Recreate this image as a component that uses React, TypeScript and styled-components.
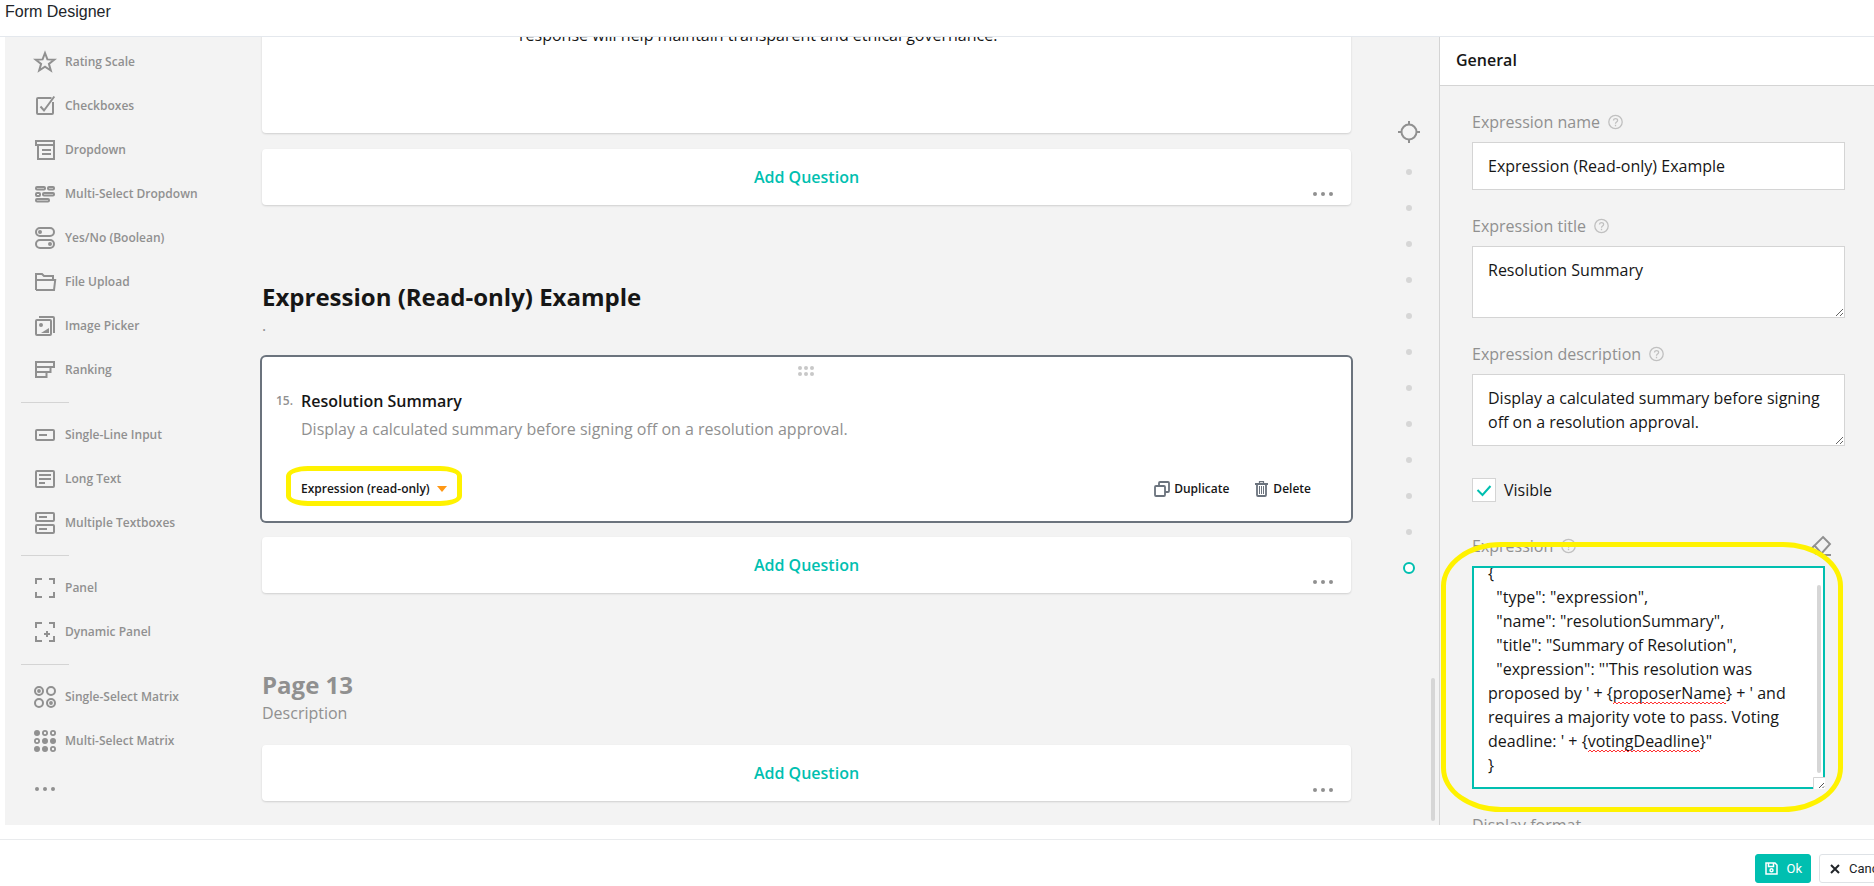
import React, { useEffect, useRef } from "react";
import styled, { createGlobalStyle, css } from "styled-components";

const teal = "#00bfb0";
const muted = "#909090";
const ink = "#161616";
const line = "#d4d4d4";
const slate = "#6b737d";

const GlobalStyle = createGlobalStyle`
  *, *::before, *::after { box-sizing: border-box; }
  html, body { margin: 0; height: 100%; overflow: hidden; }
  body { background: #fff; color: ${ink}; font: 400 16px/24px "Open Sans", sans-serif; }
  #root { height: 100%; }
  button, input, textarea { font: inherit; color: inherit; margin: 0; }
  button { border: 0; background: none; padding: 0; cursor: pointer; }
  h1, h2, h3, p { margin: 0; }
  ul { list-style: none; margin: 0; padding: 0; }
`;

const Dialog = styled.div`
  display: flex;
  flex-direction: column;
  height: 100%;
  min-height: 0;
`;

const TitleBar = styled.header`
  flex: none;
  height: 37px;
  padding: 3px 5px;
  border-bottom: 1px solid #e4e8ed;
  h1 {
    font: 400 16px/18px "Liberation Sans", Arial, sans-serif;
    color: #212529;
  }
`;

const Workspace = styled.main`
  flex: 1;
  min-height: 0;
  display: flex;
  margin: 0 0 14px 5px;
  background: #f3f3f3;
  overflow: hidden;
`;

const Toolbox = styled.nav`
  flex: none;
  width: 257px;
  padding: 3px 16px 0;
`;

const ToolButton = styled.button`
  display: flex;
  align-items: center;
  gap: 8px;
  height: 44px;
  padding: 0 12px;
  color: ${muted};
  font-size: 12px;
  font-weight: 600;
  line-height: 16px;
  white-space: nowrap;
`;

const ToolRule = styled.hr`
  width: 48px;
  margin: 10px 0;
  border: 0;
  border-top: 1px solid ${line};
`;

const MoreTools = styled(ToolButton)`
  margin-top: 4px;
`;

const Surface = styled.section`
  flex: 1;
  min-width: 0;
  display: flex;
  flex-direction: column;
  justify-content: flex-end;
  padding-bottom: 24px;
  > * { flex: none; }
`;

const Card = styled.div`
  background: #fff;
  border-radius: 4px;
  box-shadow: 0 1px 2px rgba(0, 0, 0, 0.15);
`;

const HtmlCard = styled(Card)`
  padding: 24px 257px 86px;
`;

const AddCard = styled(Card)`
  display: grid;
  grid-template-columns: 40px 1fr 40px;
  height: 56px;
  margin-top: 16px;
`;

const AddButton = styled.button`
  grid-column: 2;
  color: ${teal};
  font-weight: 600;
`;

const MoreButton = styled.button`
  align-self: end;
  justify-self: start;
  width: 24px;
  height: 22px;
  display: flex;
  color: ${muted};
`;

const PageHead = styled.div<{ $muted?: boolean }>`
  padding: 76px 0 20px;
  h2 {
    font-size: 24px;
    font-weight: 700;
    line-height: 32px;
    color: ${(p) => (p.$muted ? muted : ink)};
  }
  p { color: ${muted}; }
  & + ${AddCard} { margin-top: 0; }
`;

const QuestionCard = styled(Card)`
  height: 164px;
  box-shadow: 0 0 0 2px ${slate};
  padding: 8px 40px 20px 14px;
  display: flex;
  flex-direction: column;
`;

const DragHandle = styled.button`
  align-self: center;
  margin-left: 25px;
  height: 12px;
  width: 24px;
  display: flex;
  align-items: center;
  justify-content: center;
  color: #c8c8c8;
`;

const QuestionText = styled.div`
  display: grid;
  grid-template-columns: 25px 1fr;
  row-gap: 4px;
  margin-top: 12px;
  span { font-size: 12px; font-weight: 600; color: ${muted}; }
  h3 { font-size: 16px; font-weight: 600; line-height: 24px; }
  p { grid-column: 2; color: ${muted}; }
`;

const QuestionActions = styled.div`
  display: flex;
  align-items: center;
  gap: 26px;
  height: 24px;
  margin-top: auto;
  padding-left: 25px;
`;

const ActionButton = styled.button`
  position: relative;
  display: flex;
  align-items: center;
  gap: 4px;
  height: 24px;
  font-size: 12px;
  font-weight: 600;
  line-height: 16px;
  svg { color: ${slate}; }
`;

const TypeButton = styled(ActionButton)`
  gap: 7px;
  margin-right: auto;
`;

const marker = css`
  position: absolute;
  border: 5px solid #fff200;
  pointer-events: none;
`;

const TypeMarker = styled.i`
  ${marker}
  inset: -11px -15px -5px;
  border-radius: 22px / 10px;
`;

const Navigator = styled.nav`
  flex: none;
  width: 88px;
  padding: 83px 0 0 46px;
  position: relative;
  ul { margin-top: 10px; }
`;

const NavTarget = styled.button`
  display: flex;
  width: 24px;
  height: 24px;
  color: ${muted};
`;

const NavDot = styled.button<{ $active?: boolean }>`
  display: grid;
  place-items: center;
  width: 24px;
  height: 36px;
  &::before {
    content: "";
    width: ${(p) => (p.$active ? 12 : 6)}px;
    height: ${(p) => (p.$active ? 12 : 6)}px;
    border-radius: 50%;
    ${(p) => (p.$active ? `border: 2px solid ${teal}; background: #fff;` : "background: #d6d6d6;")}
  }
`;

const ScrollThumb = styled.i`
  position: absolute;
  right: 4px;
  bottom: 4px;
  width: 4px;
  height: 143px;
  border-radius: 2px;
  background: #d6d6d6;
`;

const Properties = styled.aside`
  flex: none;
  width: 435px;
  border-left: 1px solid ${line};
`;

const PanelHead = styled.h2`
  height: 49px;
  padding: 11px 16px;
  border-bottom: 1px solid ${line};
  background: #fff;
  font-size: 16px;
  font-weight: 600;
  line-height: 24px;
`;

const Fields = styled.form`
  display: flex;
  flex-direction: column;
  gap: 24px;
  padding: 24px 29px 0 32px;
`;

const Field = styled.div`
  display: flex;
  flex-direction: column;
  gap: 8px;
`;

const FieldHead = styled.div`
  display: flex;
  align-items: center;
  gap: 8px;
  height: 24px;
  color: ${muted};
  svg { color: #c0c0c0; }
`;

const EraseButton = styled.button`
  margin: 0 12px 0 auto;
  display: flex;
  svg { color: ${muted}; }
`;

const box = css`
  display: block;
  width: 100%;
  border: 1px solid ${line};
  border-radius: 0;
  background: #fff;
  outline: none;
`;

const TextInput = styled.input`
  ${box}
  height: 48px;
  padding: 0 15px;
`;

const TextBox = styled.textarea`
  ${box}
  height: 72px;
  padding: 11px 15px;
  resize: vertical;
`;

const CheckLabel = styled.label`
  display: flex;
  align-items: center;
  gap: 8px;
  height: 24px;
  margin: 8px 0;
`;

const CheckBox = styled.span`
  position: relative;
  display: flex;
  width: 24px;
  height: 24px;
  color: ${teal};
  input {
    appearance: none;
    width: 24px;
    height: 24px;
    border: 1px solid ${line};
    background: #fff;
  }
  svg { position: absolute; inset: 0; pointer-events: none; }
`;

const CodeWrap = styled.div`
  position: relative;
  margin-right: 20px;
`;

const CodeBox = styled.textarea`
  ${box}
  height: 223px;
  padding: 11px 22px 10px 14px;
  border: 2px solid ${teal};
  resize: none;
  scrollbar-width: none;
`;

const CodeThumb = styled.i`
  position: absolute;
  right: 4px;
  top: 19px;
  width: 4px;
  height: 188px;
  border-radius: 2px;
  background: #d6d6d6;
`;

const Grip = styled.svg`
  position: absolute;
  right: 0;
  bottom: 0;
`;

const Squiggle = styled.svg<{ $x: number; $y: number }>`
  position: absolute;
  left: ${(p) => p.$x}px;
  top: ${(p) => p.$y}px;
  pointer-events: none;
`;

const CodeMarker = styled.i`
  ${marker}
  inset: -24px -18px -23px -31px;
  border-radius: 60px / 44px;
`;

const Footer = styled.footer`
  flex: none;
  display: flex;
  justify-content: flex-end;
  gap: 8px;
  height: 47px;
  padding-top: 14px;
  border-top: 1px solid #e9ebed;
  overflow: hidden;
`;

const FooterButton = styled.button<{ $primary?: boolean }>`
  flex: none;
  display: flex;
  align-items: center;
  gap: 8px;
  height: 29px;
  padding: 0 8px 0 9px;
  border: 1px solid ${(p) => (p.$primary ? teal : "#dee2e6")};
  border-radius: 3px;
  background: ${(p) => (p.$primary ? teal : "#fff")};
  color: ${(p) => (p.$primary ? "#fff" : "#212529")};
  font: 400 13px/16px Roboto, sans-serif;
`;

const CancelButton = styled(FooterButton)`
  width: 80px;
  margin-right: -25px;
`;

const icons: Record<string, React.ReactNode> = {
  star: <path d="M12 3l2.400 6.400 6.900.3-5.400 4.200 1.900 6.600-5.800-3.800-5.800 3.800 1.900-6.600-5.400-4.200 6.900-.3z" />,
  check: <><path d="M18.500 4H5Q4 4 4 5v14q0 1 1 1h14q1 0 1-1V8" /><path d="M7.500 12.500l3.500 4L21.300 2.500" /></>,
  dropdown: <><path d="M3 3h18v18H5V7H3zM4 7h16" /><path d="M9 12h9M9 16h9" /></>,
  tags: <><rect x="3" y="5" width="9" height="2.6" rx="1" /><rect x="15" y="5" width="6" height="2.6" rx="1" /><rect x="3" y="11" width="4" height="3" rx="1" /><rect x="10" y="11" width="11" height="2.6" rx="1" /><rect x="3" y="17" width="13" height="2.6" rx="1" /></>,
  bool: <><rect x="3" y="2" width="18" height="8" rx="4" /><rect x="3" y="14" width="18" height="8" rx="4" /><circle cx="7" cy="6" r="1" /><circle cx="17" cy="18" r="1" /></>,
  file: <path d="M3 20V4h6l2 2h9v4M3 20h18l1.200-10H3" />,
  image: <><rect x="3" y="6" width="15" height="15" rx="1" /><path d="M6 3h14q1 0 1 1v15" /><circle cx="8" cy="11" r="1" /><path d="M8 19l8-5v5z" fill="currentColor" stroke="none" /></>,
  ranking: <path d="M3 4h18v5H3zM3 9h14.500v5H3zM3 14h10.500v5H3z" />,
  text: <><rect x="3" y="7" width="18" height="10" rx="1" /><path d="M6 12h8" /></>,
  comment: <><rect x="3" y="4" width="18" height="16" rx="1" /><path d="M6 8h12M6 12h12M6 16h6" /></>,
  multi: <><rect x="3" y="2" width="18" height="8" rx="1" /><rect x="3" y="14" width="18" height="8" rx="1" /><path d="M6 6h8M6 18h8" /></>,
  panel: <path d="M9 3H3v5M16 3h5v5M3 16v5h6M16 21h5v-5" />,
  dynamic: <path d="M9 3H3v5M16 3h5v5M3 16v5h6M16 21h5v-5M14 11v6M11 14h6" />,
  matrix: <><circle cx="6" cy="6" r="4" /><circle cx="18" cy="6" r="4" /><circle cx="6" cy="18" r="4" /><circle cx="18" cy="18" r="4" /><circle cx="6" cy="6" r=".9" /><circle cx="18" cy="18" r=".9" /></>,
};

const Icon = ({ name }: { name: string }) => (
  <svg width="24" height="24" viewBox="0 0 24 24" fill="none" stroke="currentColor" strokeWidth="2" aria-hidden="true">
    {icons[name]}
  </svg>
);

const filledCells = [0, 4, 5, 6, 7];

const GridIcon = () => (
  <svg width="24" height="24" viewBox="0 0 24 24" fill="none" stroke="currentColor" strokeWidth="1.800" aria-hidden="true">
    {Array.from({ length: 9 }, (_, i) => (
      <circle key={i} cx={4 + (i % 3) * 8} cy={4 + Math.floor(i / 3) * 8} r="2.100" fill={filledCells.includes(i) ? "currentColor" : "none"} />
    ))}
  </svg>
);

const DotsIcon = ({ cy = 12 }: { cy?: number }) => (
  <svg width="24" height="24" viewBox="0 0 24 24" fill="currentColor" aria-hidden="true">
    <circle cx="4" cy={cy} r="2" /><circle cx="12" cy={cy} r="2" /><circle cx="20" cy={cy} r="2" />
  </svg>
);

const HelpIcon = () => (
  <svg width="15" height="16" viewBox="0 0 15 16" fill="none" stroke="currentColor" strokeWidth="1.300" aria-hidden="true">
    <circle cx="7.500" cy="8" r="6.700" />
    <path d="M5.500 6.600c0-2.700 4.200-2.600 4.100-.1 0 1.500-2.100 1.500-2.100 3.200M7.500 10.700v1.500" />
  </svg>
);

const tools: [string, string][][] = [
  [["star", "Rating Scale"], ["check", "Checkboxes"], ["dropdown", "Dropdown"], ["tags", "Multi-Select Dropdown"], ["bool", "Yes/No (Boolean)"], ["file", "File Upload"], ["image", "Image Picker"], ["ranking", "Ranking"]],
  [["text", "Single-Line Input"], ["comment", "Long Text"], ["multi", "Multiple Textboxes"]],
  [["panel", "Panel"], ["dynamic", "Dynamic Panel"]],
  [["matrix", "Single-Select Matrix"], ["grid", "Multi-Select Matrix"]],
];

const expressionCode = `{
  "type": "expression",
  "name": "resolutionSummary",
  "title": "Summary of Resolution",
  "expression": "'This resolution was proposed by ' + {proposerName} + ' and requires a majority vote to pass. Voting deadline: ' + {votingDeadline}"
}`;

const AddQuestion = () => (
  <AddCard>
    <AddButton type="button">Add Question</AddButton>
    <MoreButton type="button" aria-label="Choose question type"><DotsIcon cy={11} /></MoreButton>
  </AddCard>
);

const Wave = ({ x, y, width }: { x: number; y: number; width: number }) => (
  <Squiggle $x={x} $y={y} width={width} height="4" viewBox={`0 0 ${width} 4`} fill="none" stroke="#f33" aria-hidden="true">
    <path d={"M0 3" + "l2-2l2 2".repeat(Math.ceil(width / 4))} />
  </Squiggle>
);

const ExpressionEditor = () => {
  const ref = useRef<HTMLTextAreaElement>(null);
  useEffect(() => {
    if (ref.current) ref.current.scrollTop = ref.current.scrollHeight;
  }, []);
  return (
    <CodeWrap>
      <CodeBox id="expression" ref={ref} spellCheck={false} defaultValue={expressionCode} />
      <CodeThumb />
      <Grip width="12" height="12" viewBox="0 0 12 12" aria-hidden="true">
        <path d="M0 0h12v12H0z" fill="#fff" />
        <path d="M.5 12V.5H12" fill="none" stroke={line} />
        <path d="M6 11l5-5M9.500 11L11 9.500" stroke="#555" />
      </Grip>
      <Wave x={141} y={135} width={113} />
      <Wave x={116} y={183} width={112} />
      <CodeMarker />
    </CodeWrap>
  );
};

export default function App() {
  return (
    <Dialog>
      <GlobalStyle />
      <TitleBar><h1>Form Designer</h1></TitleBar>
      <Workspace>
        <Toolbox aria-label="Toolbox">
          {tools.map((group, i) => (
            <React.Fragment key={i}>
              {i > 0 && <ToolRule />}
              {group.map(([icon, label]) => (
                <ToolButton type="button" key={label}>
                  {icon === "grid" ? <GridIcon /> : <Icon name={icon} />}
                  {label}
                </ToolButton>
              ))}
            </React.Fragment>
          ))}
          <MoreTools type="button" aria-label="More"><DotsIcon /></MoreTools>
        </Toolbox>

        <Surface>
          <HtmlCard><p>response will help maintain transparent and ethical governance.</p></HtmlCard>
          <AddQuestion />
          <PageHead>
            <h2>Expression (Read-only) Example</h2>
            <p>.</p>
          </PageHead>
          <QuestionCard>
            <DragHandle type="button" aria-label="Move question">
              <svg width="16" height="10" viewBox="0 0 16 10" fill="currentColor" aria-hidden="true">
                {[2, 8, 14].map((x) => [2, 8].map((y) => <circle key={`${x}-${y}`} cx={x} cy={y} r="2" />))}
              </svg>
            </DragHandle>
            <QuestionText>
              <span>15.</span>
              <h3>Resolution Summary</h3>
              <p>Display a calculated summary before signing off on a resolution approval.</p>
            </QuestionText>
            <QuestionActions>
              <TypeButton type="button">
                Expression (read-only)
                <svg width="10" height="6" viewBox="0 0 10 6" aria-hidden="true"><path d="M0 0h10L5 6z" fill="#ff9814" /></svg>
                <TypeMarker />
              </TypeButton>
              <ActionButton type="button">
                <svg width="16" height="16" viewBox="0 0 16 16" fill="none" stroke="currentColor" strokeWidth="1.800" aria-hidden="true">
                  <rect x="1" y="5" width="10" height="10" rx="1" />
                  <path d="M5 5V2q0-1 1-1h8q1 0 1 1v8q0 1-1 1h-3" />
                </svg>
                Duplicate
              </ActionButton>
              <ActionButton type="button">
                <svg width="14" height="16" viewBox="0 0 14 16" fill="none" stroke="currentColor" aria-hidden="true">
                  <path d="M0 3h13" strokeWidth="2" />
                  <path d="M4.500 2V.6h4V2" strokeWidth="1.200" />
                  <path d="M2 4v10q0 1 1 1h7q1 0 1-1V4" strokeWidth="1.800" />
                  <path d="M4.500 5v8M6.500 5v8M8.500 5v8" />
                </svg>
                Delete
              </ActionButton>
            </QuestionActions>
          </QuestionCard>
          <AddQuestion />
          <PageHead $muted>
            <h2>Page 13</h2>
            <p>Description</p>
          </PageHead>
          <AddQuestion />
        </Surface>

        <Navigator aria-label="Pages">
          <NavTarget type="button" aria-label="Go to current page">
            <svg width="24" height="24" viewBox="0 0 24 24" fill="none" stroke="currentColor" strokeWidth="2" aria-hidden="true">
              <circle cx="12" cy="12" r="7.500" />
              <path d="M12 1v4M12 19v4M1 12h4M19 12h4" />
            </svg>
          </NavTarget>
          <ul>
            {Array.from({ length: 12 }, (_, i) => (
              <li key={i}><NavDot type="button" $active={i === 11} aria-label={`Page ${i + 1}`} /></li>
            ))}
          </ul>
          <ScrollThumb />
        </Navigator>

        <Properties>
          <PanelHead>General</PanelHead>
          <Fields>
            <Field>
              <FieldHead><label htmlFor="name">Expression name</label><HelpIcon /></FieldHead>
              <TextInput id="name" defaultValue="Expression (Read-only) Example" />
            </Field>
            <Field>
              <FieldHead><label htmlFor="title">Expression title</label><HelpIcon /></FieldHead>
              <TextBox id="title" defaultValue="Resolution Summary" />
            </Field>
            <Field>
              <FieldHead><label htmlFor="description">Expression description</label><HelpIcon /></FieldHead>
              <TextBox id="description" spellCheck={false} defaultValue="Display a calculated summary before signing off on a resolution approval." />
            </Field>
            <CheckLabel>
              <CheckBox>
                <input type="checkbox" defaultChecked />
                <svg width="24" height="24" viewBox="0 0 24 24" fill="none" stroke="currentColor" strokeWidth="2" aria-hidden="true">
                  <path d="M5.500 12l5 5 8-9" />
                </svg>
              </CheckBox>
              Visible
            </CheckLabel>
            <Field>
              <FieldHead>
                <label htmlFor="expression">Expression</label><HelpIcon />
                <EraseButton type="button" aria-label="Clear">
                  <svg width="24" height="24" viewBox="0 0 24 24" fill="none" stroke="currentColor" strokeWidth="1.900" aria-hidden="true">
                    <path d="M14 3l7 7-8.500 9.500-7-8zM5.500 11.500L2 15l4.500 4.500h6M15 21h7" />
                  </svg>
                </EraseButton>
              </FieldHead>
              <ExpressionEditor />
            </Field>
            <FieldHead>Display format</FieldHead>
          </Fields>
        </Properties>
      </Workspace>

      <Footer>
        <FooterButton type="button" $primary>
          <svg width="13" height="13" viewBox="0 0 13 13" fill="none" stroke="currentColor" strokeWidth="1.500" aria-hidden="true">
            <path d="M1 1h9l2 2v9H1zM3.500 1v3.500h5V1" />
            <circle cx="6.500" cy="8.300" r="1.500" />
          </svg>
          Ok
        </FooterButton>
        <CancelButton type="button">
          <svg width="12" height="12" viewBox="0 0 12 12" fill="none" stroke="currentColor" strokeWidth="2" aria-hidden="true">
            <path d="M2 2l8 8M10 2l-8 8" />
          </svg>
          Cancel
        </CancelButton>
      </Footer>
    </Dialog>
  );
}
